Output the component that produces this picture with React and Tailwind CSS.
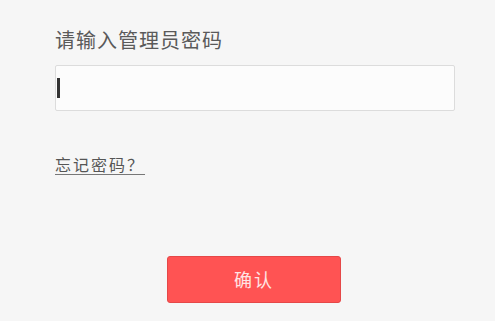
export default function App() {
  return (
    <div
      className="w-[495px] h-[321px] bg-[#f6f6f6] overflow-hidden"
      style={{ fontFamily: '"Noto Sans CJK SC", "Liberation Sans", sans-serif' }}
    >
      <div className="pl-[55px] pt-[26px] flex flex-col">
        <div className="text-[20px] leading-[28px] tracking-[1px] text-[#5a5a5a]">
          请输入管理员密码
        </div>

        {/* password field */}
        <div className="mt-[11px] w-[400px] h-[46px] bg-[#fcfcfc] border border-[#dcdcdc] rounded-[2px] flex items-center pl-[1px]">
          <div className="w-[3px] h-[20px] bg-[#333]" />
        </div>

        <a
          href="#"
          className="mt-[42px] self-start text-[16px] leading-[22px] tracking-[2px] text-[#555] underline underline-offset-[3px] decoration-[#777]"
        >
          忘记密码？
        </a>

        <button className="mt-[81px] ml-[112px] w-[174px] h-[47px] rounded-[3px] bg-[#ff5353] border border-[#e54848] text-[18px] tracking-[2px] text-[#ffe4e4] flex items-center justify-center">
          确认
        </button>
      </div>
    </div>
  );
}
